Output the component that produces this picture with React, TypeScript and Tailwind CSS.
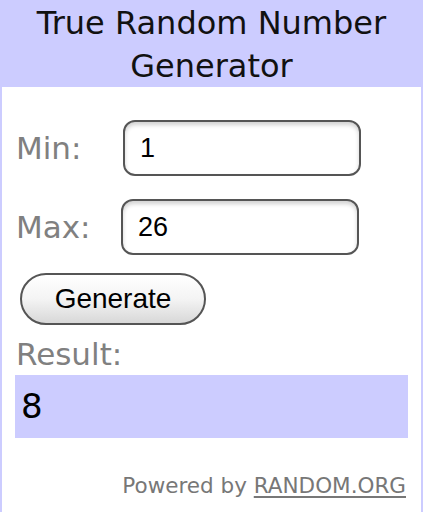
export default function App() {
  return (
    <div
      className="w-[423px] h-[512px] bg-[#ccccff] px-[2px] flex flex-col overflow-hidden"
      style={{ fontFamily: '"DejaVu Sans", Verdana, sans-serif' }}
    >
      <div className="h-[87px] flex flex-col items-center justify-center text-[32px] leading-[43px] text-[#111] pt-[2px]">
        <div>True Random Number</div>
        <div>Generator</div>
      </div>

      <div className="flex-1 bg-white pl-[14px] pr-[13px] pt-[33px]">
        <div className="flex items-center h-[56px]">
          <span className="w-[107px] text-[31px] text-[#808080]">Min:</span>
          <div className="w-[238px] h-[56px] rounded-[12px] border-2 border-[#555] bg-white shadow-[inset_0_3px_4px_rgba(0,0,0,0.18)] flex items-center pl-[15px] text-[27px] text-black font-['Liberation_Sans',Arial,sans-serif]">
            1
          </div>
        </div>

        <div className="flex items-center h-[56px] mt-[23px]">
          <span className="w-[105px] text-[31px] text-[#808080]">Max:</span>
          <div className="w-[238px] h-[56px] rounded-[12px] border-2 border-[#555] bg-white shadow-[inset_0_3px_4px_rgba(0,0,0,0.18)] flex items-center pl-[15px] text-[27px] text-black font-['Liberation_Sans',Arial,sans-serif]">
            26
          </div>
        </div>

        <button className="mt-[18px] ml-[4px] w-[186px] h-[52px] rounded-full border-2 border-[#555] bg-gradient-to-b from-white via-[#f4f4f4] to-[#d8d8d8] text-[28px] text-black font-['Liberation_Sans',Arial,sans-serif] flex items-center justify-center">
          Generate
        </button>

        <div className="mt-[9px] text-[31px] leading-[40px] text-[#808080]">Result:</div>

        <div className="mt-[1px] -ml-px w-[393px] h-[63px] bg-[#ccccff] flex items-center pl-[6px] text-[34px] text-black">
          8
        </div>

        <div className="mt-[32px] pr-[2px] text-right text-[21.5px] text-[#777]">
          Powered by <span className="underline underline-offset-[3px]">RANDOM.ORG</span>
        </div>
      </div>
    </div>
  );
}
